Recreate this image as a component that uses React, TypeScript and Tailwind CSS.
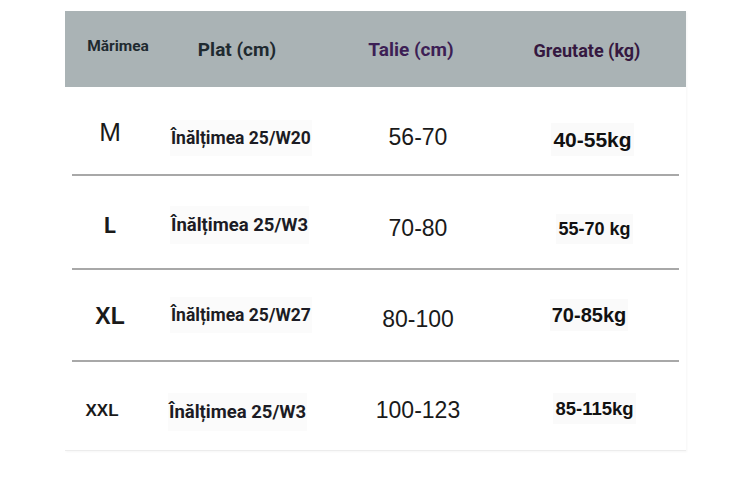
import React from 'react';

const roboto = "font-['Roboto',sans-serif]";
const arial = "font-['Liberation_Sans',Arial,sans-serif]";

interface SizeRow {
    size: string;
    sizeClass: string;
    plat: string;
    platClass: string;
    talie: string;
    talieClass: string;
    greutate: string;
    greutateClass: string;
    height: string;
}

const rows: SizeRow[] = [
    { size: 'M', sizeClass: `${arial} text-[26px] font-normal pt-[4px]`, plat: 'Înălțimea 25/W20', platClass: 'text-[17.5px] pt-[15px] pl-[15px]', talie: '56-70', talieClass: 'pt-[13px]', greutate: '40-55kg', greutateClass: 'text-[21px] pt-[18px] pr-[1px]', height: 'h-[87px]' },
    { size: 'L', sizeClass: `${roboto} text-[22px] font-bold pt-[6px]`, plat: 'Înălțimea 25/W3', platClass: 'text-[18.5px] pt-[8px] pl-[15px]', talie: '70-80', talieClass: 'pt-[12px]', greutate: '55-70 kg', greutateClass: 'text-[18px] pt-[14px] pl-[3px]', height: 'h-[92px]' },
    { size: 'XL', sizeClass: `${arial} text-[23px] font-bold pt-[2px]`, plat: 'Înălțimea 25/W27', platClass: 'text-[17.5px] pt-[0px] pl-[15px]', talie: '80-100', talieClass: 'pt-[8px]', greutate: '70-85kg', greutateClass: 'text-[20px] pt-[0px] pr-[8px]', height: 'h-[90px]' },
    { size: 'XXL', sizeClass: `${arial} text-[17px] font-bold pt-[10px] pr-[16px]`, plat: 'Înălțimea 25/W3', platClass: 'text-[18.5px] pt-[14px] pl-[13px]', talie: '100-123', talieClass: 'pt-[8px]', greutate: '85-115kg', greutateClass: 'text-[18.5px] pt-[6px] pl-[3px]', height: 'h-[88px]' },
];

const cols = 'grid grid-cols-[90px_172px_182px_168px] items-center';

export default function App() {
    return (
        <div className="w-[750px] h-[486px] bg-white pt-[11px] pl-[65px]">
            <div className="w-[621px] bg-white border-b border-[#ececec] shadow-[1px_1px_2px_rgba(0,0,0,0.04)]">
                <div className={`${cols} h-[76px] bg-[#aab3b5] ${roboto} font-bold`}>
                    <div className="text-[15.5px] text-[#1f2a30] text-center pb-[4px] pl-[16px]">Mărimea</div>
                    <div className="text-[19px] text-[#1f2a30] text-center pt-[2px] pr-[8px]">Plat (cm)</div>
                    <div className="text-[19px] text-[#3d1f55] text-center pt-[2px] pr-[14px]">Talie (cm)</div>
                    <div className="text-[18px] text-[#351840] text-center pt-[2px] pr-[12px]">Greutate (kg)</div>
                </div>
                {rows.map((r, i) => (
                    <div key={r.size}>
                        <div className={`${cols} ${r.height}`}>
                            <div className={`text-[#1a1a1a] text-center ${r.sizeClass}`}>{r.size}</div>
                            <div className={`${roboto} font-bold text-[#1c1c24] text-left ${r.platClass}`}>
                                <span className="bg-[#fbfbfb] px-[1px] py-[8px]">{r.plat}</span>
                            </div>
                            <div className={`${arial} text-[23px] text-[#1a1a1a] text-center ${r.talieClass}`}>{r.talie}</div>
                            <div className={`${arial} font-bold text-[#111] text-center ${r.greutateClass}`}>
                                <span className="bg-[#fafafa] px-[2px] py-[5px]">{r.greutate}</span>
                            </div>
                        </div>
                        {i < rows.length - 1 && <div className="mx-[7px] h-[2px] bg-[#a8a8a8]" />}
                    </div>
                ))}
            </div>
        </div>
    );
}
